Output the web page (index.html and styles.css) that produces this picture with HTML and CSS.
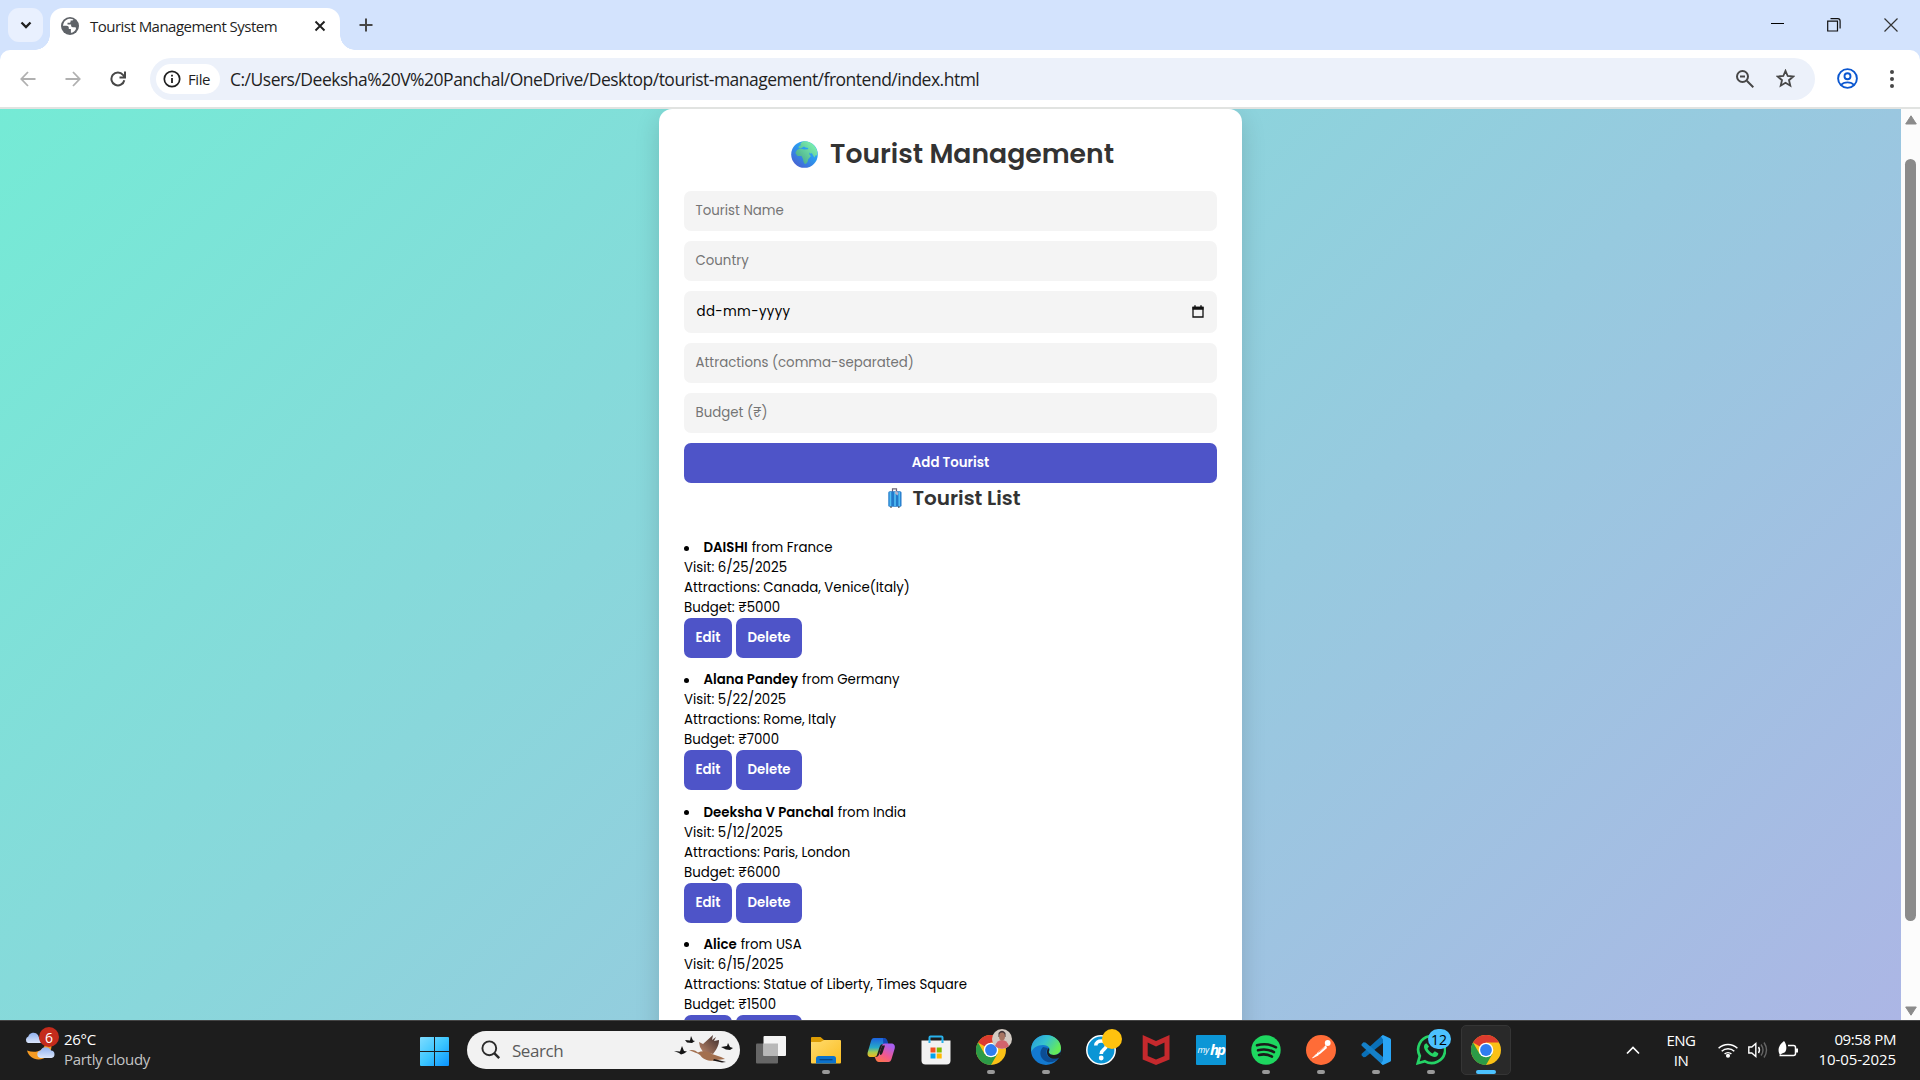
FILE: index.html
```html
<!DOCTYPE html>
<html lang="en">
<head>
<meta charset="utf-8">
<title>Tourist Management System</title>
<link rel="stylesheet" href="styles.css">
</head>
<body>
<div class="desktop">
  <header class="tabstrip">
    <button class="tab-search" aria-label="Search tabs"><svg width="12" height="8" viewBox="0 0 12 8"><path d="M1.500 1.500 6 6l4.500-4.500" fill="none" stroke="#1f1f1f" stroke-width="2.300"/></svg></button>
    <div class="tab">
      <svg class="favicon" viewBox="0 0 18 18"><circle cx="9" cy="9" r="9" fill="#5f6368"/><path d="M8 1.800c-2 .3-4.600 2-5.500 4.600l-.6 2.300 3.500.1c1.600 0 2.400.8 2.400 2v1.300h2.100v3.700c1.200-.1 3.700-1.200 4.800-3.400.5-1 .4-2-.5-2.200h-2.400c-1 0-1.700-.8-1.700-1.700v-1H6.500V5.700h1.800c.8 0 1.300-.6 1.300-1.300V3.500h1.900l1-1C11 1.700 9.500 1.500 8 1.800Z" fill="#fff"/></svg>
      <span class="tab-title">Tourist Management System</span>
      <svg class="tab-close" viewBox="0 0 12 12"><path d="m1.500 1.500 9 9m0-9-9 9" stroke="#1f1f1f" stroke-width="1.900"/></svg>
    </div>
    <svg class="new-tab" viewBox="0 0 14 14"><path d="M7 .5v13M.5 7h13" stroke="#474747" stroke-width="2"/></svg>
    <div class="window-controls">
      <svg width="13" height="14" viewBox="0 0 13 14"><path d="M0 5.500h13" stroke="#000"/></svg>
      <svg width="14" height="14" viewBox="0 0 14 14"><path d="M.7 3.200h9.800v9.800H.7zM3.500.7h7.300q2.300 0 2.300 2.300v7.500" fill="none" stroke="#111" stroke-width="1.200"/></svg>
      <svg width="14" height="14" viewBox="0 0 14 14"><path d="m.5.5 13 13m0-13-13 13" stroke="#333" stroke-width="1.200"/></svg>
    </div>
  </header>

  <nav class="toolbar">
    <svg class="nav-icon" viewBox="0 0 16 16"><path d="M15.500 8H1.500M8 1 1.300 8 8 15" fill="none" stroke="#b0b0b0" stroke-width="1.800"/></svg>
    <svg class="nav-icon" viewBox="0 0 16 16"><path d="M.5 8h14M8 1l6.700 7L8 15" fill="none" stroke="#b0b0b0" stroke-width="1.800"/></svg>
    <svg class="nav-icon" viewBox="0 0 16 16"><path d="M14.300 9.200A6.500 6.500 0 1 1 13 3.800l1.500 1.700M15 .5v6H9.500" fill="none" stroke="#474747" stroke-width="2"/></svg>
    <div class="omnibox">
      <div class="file-chip">
        <svg width="18" height="18" viewBox="0 0 18 18"><circle cx="9" cy="9" r="7.700" fill="none" stroke="#1f1f1f" stroke-width="1.700"/><path d="M9 8v5M9 4.800v1.800" stroke="#1f1f1f" stroke-width="1.800"/></svg>
        <span class="file-label">File</span>
      </div>
      <span class="url">C:/Users/Deeksha%20V%20Panchal/OneDrive/Desktop/tourist-management/frontend/index.html</span>
      <svg class="zoom-icon" width="18" height="18" viewBox="0 0 18 18"><path d="m10.800 10.800 6.500 6.500M4 6.500h5" stroke="#474747" stroke-width="2"/><circle cx="6.500" cy="6.500" r="5.500" fill="none" stroke="#474747" stroke-width="2"/></svg>
      <svg width="19" height="19" viewBox="0 0 19 19"><path d="m9.500 1.800 2.200 5.200 5.600.5-4.300 3.700 1.300 5.500-4.800-2.900-4.800 2.900L6 11.200 1.700 7.500 7.300 7Z" fill="none" stroke="#474747" stroke-width="1.800"/></svg>
    </div>
    <svg class="profile" width="21" height="21" viewBox="0 0 21 21" fill="none" stroke="#0b57d0" stroke-width="1.900"><circle cx="10.500" cy="10.500" r="9.400"/><circle cx="10.500" cy="8.300" r="3"/><path d="M4 17c1.500-1.800 3.800-2.600 6.500-2.600S15.500 15.200 17 17"/></svg>
    <svg class="kebab" width="4" height="18" viewBox="0 0 4 18" fill="#474747"><circle cx="2" cy="2" r="2"/><circle cx="2" cy="9" r="2"/><circle cx="2" cy="16" r="2"/></svg>
  </nav>

  <main class="viewport">
    <div class="page">
      <section class="card">
        <h1 class="title">
          <svg class="globe" viewBox="0 0 27 27"><defs><linearGradient id="sea" x1="1" y1="0" x2="0.200" y2="1"><stop offset="0" stop-color="#31b5fb"/><stop offset="0.500" stop-color="#2c97ee"/><stop offset="1" stop-color="#4a5fd0"/></linearGradient><linearGradient id="land" x1="1" y1="0" x2="0" y2="1"><stop offset="0" stop-color="#86ffb4"/><stop offset="1" stop-color="#3f9a85"/></linearGradient></defs><circle cx="13.500" cy="13.500" r="13.300" fill="url(#sea)"/><path d="M12 .5c6-1 12 3 14 9l.4 5-1.700-.3-1.200 2.300-1.500-2.200-1-2-2 .2-1-1.300.5 2.500 1.500 1.300-2.800 3.200c-.3 2.500-1.300 4.500-3.200 5-1.500-1.500-1.700-3.300-2-5.200l-1.500-3H6.500L4.300 12l1.700-3 3.300-1.500 4 1 3.500-.3.500-1.200-2.800-.5-1.500-1-2.500 1.500-3 .2.300-2.200 2-.8-.3-2Z" fill="url(#land)"/></svg>
          <span>Tourist Management</span>
        </h1>
        <form class="form">
          <div class="field"><span>Tourist Name</span></div>
          <div class="field"><span>Country</span></div>
          <div class="field field-date"><span>dd-mm-yyyy</span>
            <svg width="12" height="13" viewBox="0 0 12 13"><path d="M1 2.300h10v9.700H1z" fill="none" stroke="#111" stroke-width="1.300"/><path d="M.5 1.700h11v3H.5zM2.300.2h1.400v2H2.300zM8.300.2h1.400v2H8.300z" fill="#111"/></svg>
          </div>
          <div class="field"><span>Attractions (comma-separated)</span></div>
          <div class="field"><span>Budget (₹)</span></div>
          <button type="button" class="btn">Add Tourist</button>
        </form>
        <h2 class="subtitle">
          <svg class="luggage" viewBox="0 0 14 20"><path d="M4.500 4V.8h4V4" fill="none" stroke="#6b6477" stroke-width="1.200"/><rect x=".3" y="3.200" width="13.200" height="15.500" rx="1.500" fill="#2379c9"/><path d="M2.400 4v14M7 4v14M11.300 4v14" stroke="#50bdf3" stroke-width="1.700"/><path d="M3 18.500v1.300M10.800 18.500v1.300" stroke="#444" stroke-width="1.500"/><path d="m7.500 2.500 3 2.500-1 2.500-2.500-2Z" fill="#b9b3c9"/></svg>
          <span>Tourist List</span>
        </h2>
        <ul class="list">
          <li><p class="who"><b>DAISHI</b><span>from France</span></p><p>Visit: 6/25/2025</p><p>Attractions: Canada, Venice(Italy)</p><p>Budget: ₹5000</p><div class="actions"><button class="btn btn-edit">Edit</button><button class="btn btn-delete">Delete</button></div></li>
          <li><p class="who"><b>Alana Pandey</b><span>from Germany</span></p><p>Visit: 5/22/2025</p><p>Attractions: Rome, Italy</p><p>Budget: ₹7000</p><div class="actions"><button class="btn btn-edit">Edit</button><button class="btn btn-delete">Delete</button></div></li>
          <li><p class="who"><b>Deeksha V Panchal</b><span>from India</span></p><p>Visit: 5/12/2025</p><p>Attractions: Paris, London</p><p>Budget: ₹6000</p><div class="actions"><button class="btn btn-edit">Edit</button><button class="btn btn-delete">Delete</button></div></li>
          <li><p class="who"><b>Alice</b><span>from USA</span></p><p>Visit: 6/15/2025</p><p>Attractions: Statue of Liberty, Times Square</p><p>Budget: ₹1500</p><div class="actions"><button class="btn btn-edit" aria-label="Edit"></button><button class="btn btn-delete" aria-label="Delete"></button></div></li>
        </ul>
      </section>
    </div>
    <aside class="scrollbar">
      <svg width="12" height="10" viewBox="0 0 12 10"><path d="M6 .8 11.300 9H.7Z" fill="#8b8b8b" stroke="#8b8b8b" stroke-linejoin="round"/></svg>
      <div class="thumb"></div>
      <svg width="12" height="10" viewBox="0 0 12 10"><path d="M6 9.200 11.300 1H.7Z" fill="#8b8b8b" stroke="#8b8b8b" stroke-linejoin="round"/></svg>
    </aside>
  </main>

  <footer class="taskbar">
    <div class="weather">
      <div class="weather-icon">
        <svg width="32" height="30" viewBox="0 0 32 30"><defs><linearGradient id="cloud" x1="0" y1="0" x2="0" y2="1"><stop offset="0" stop-color="#8fb0ee"/><stop offset="1" stop-color="#dbe6fb"/></linearGradient></defs><path d="M27.500 12.500c.5 9.500-6 15-13 15-5.500 0-10-3.500-11.500-9 8 3 16 1 18.500-6.500Z" fill="#f59b23"/><path d="M4 11a3.500 3.500 0 0 1 .3-6.500A5.500 5.500 0 0 1 14 3l3 8Z" fill="url(#cloud)"/><path d="M16.500 26a3.800 3.800 0 0 1 0-7.500 5.800 5.800 0 0 1 10.500 0 3.800 3.800 0 0 1 .5 7.500Z" fill="url(#cloud)"/></svg>
        <span class="badge badge-red">6</span>
      </div>
      <div class="stack"><span>26°C</span><span class="dim">Partly cloudy</span></div>
    </div>
    <svg class="start" viewBox="0 0 29 29"><defs><linearGradient id="win" x1="0" y1="0" x2="1" y2="1"><stop offset="0" stop-color="#7fdcff"/><stop offset="0.500" stop-color="#3cc6ff"/><stop offset="1" stop-color="#0a93ff"/></linearGradient></defs><path d="M1 0h13v14H0V1q0-1 1-1ZM15 0h13q1 0 1 1v13H15ZM0 15h14v14H1q-1 0-1-1ZM15 15h14v13q0 1-1 1H15Z" fill="url(#win)"/></svg>
    <div class="search">
      <svg width="20" height="20" viewBox="0 0 20 20"><circle cx="8.300" cy="8.300" r="6.900" fill="none" stroke="#2b2b2b" stroke-width="1.900"/><path d="m13.200 13.200 5 5" stroke="#2b2b2b" stroke-width="2.500"/></svg>
      <span class="search-label">Search</span>
      <svg class="birds" width="60" height="30" viewBox="0 0 60 30"><defs><linearGradient id="wing" x1="0" y1="1" x2="1" y2="0"><stop offset="0" stop-color="#c08a6c"/><stop offset="1" stop-color="#3b2a2a"/></linearGradient></defs><path d="m29 17-3-5-1-5 4 2L39 0l-1 5 4-3-2 4 5-1c0 6-3 10-6 14Z" fill="url(#wing)"/><path d="M15 15.500c4-1.500 7 .5 9 2 4-2 10-1.500 14 1.500l9 3 4 2-8 1c-6 2-14 0-17-5-3-2-7-3.500-11-4.500Z" fill="#a3704f"/><path d="m40 24 12 3-4 .5-9-2Z" fill="#1a1414"/><path d="m11 5 5 .5L17 1l2 4.500 2 .5-3 2-5-.5ZM0 16l6 .5L8 11l2 5 3 .5-3 2-3 1-2-1.500Zm47-4 6-1 1-3 2 4 3 1-3 2-4-.5Z" fill="#151515"/></svg>
    </div>
    <div class="apps">
      <div class="app"><svg viewBox="0 0 30 30"><rect y="8.500" width="22" height="20" rx="1" fill="#666"/><rect x="7.500" y="1" width="22.500" height="20" rx="1" fill="#f4f4f4"/><path d="M7.500 8.500H22V21H7.500z" fill="#b8b8b8"/></svg></div>
      <div class="app running"><svg viewBox="0 0 30 30"><defs><linearGradient id="fold" x1="0" y1="0" x2="1" y2="1"><stop offset="0" stop-color="#ffdb6e"/><stop offset="1" stop-color="#fbbd20"/></linearGradient></defs><path d="M0 3q0-1 1-1h8.500L13 5H29v8H0Z" fill="#dc9c04"/><path d="M0 7h9.500L13 5h16q1 0 1 1v21.500q0 1-1 1H1q-1 0-1-1Z" fill="url(#fold)"/><path d="M5 28.500v-5q0-2.500 2.500-2.500h15q2.500 0 2.500 2.500v5Z" fill="#0c72cc"/><path d="M8.500 24.700h13" stroke="#07427f" stroke-width="1.200"/></svg></div>
      <div class="app"><svg viewBox="0 0 30 30"><defs><linearGradient id="cpa" x1="0" y1="0" x2="0" y2="1"><stop offset="0" stop-color="#1c62e0"/><stop offset="0.500" stop-color="#27a9c7"/><stop offset="0.750" stop-color="#a6cc4e"/><stop offset="1" stop-color="#f5b61f"/></linearGradient><linearGradient id="cpb" x1="0" y1="1" x2="0.600" y2="0"><stop offset="0" stop-color="#ff7d3a"/><stop offset="0.500" stop-color="#f1588e"/><stop offset="1" stop-color="#a85ff0"/></linearGradient></defs><path d="M8 3h9.500c2 0 3 1.500 3.500 3l.8 3h-4.500c-2 0-3 1-3.700 3l-2.500 7.500c-.6 1.800-1.500 2.500-3 2.500H5C2 22 1 20 1.800 17L5 6c.6-2 1.500-3 3-3Z" fill="url(#cpa)"/><path d="M17 3h1c2 0 3 1.500 3.500 3l.8 3h-5Z" fill="#1449b8"/><path d="M22.500 27H13c-2 0-3-1.500-3.500-3l-.8-2c3.500 0 4-1.500 4.600-3.500L15.800 11c.6-1.800 1.500-2.500 3-2.500H25c3 0 4.500 2 3.700 5L25.500 24c-.6 2-1.500 3-3 3Z" fill="url(#cpb)"/><path d="M13.500 18 16 10.500h3L16.500 18q-.7 2-2.300 2Z" fill="#1d1d1d"/></svg></div>
      <div class="app"><svg viewBox="0 0 30 30"><path d="M8.500 7V2.500q0-1 1-1h11q1 0 1 1V7" fill="none" stroke="#28b2ec" stroke-width="2"/><path d="M.5 5.500h29v20q0 4-4 4h-21q-4 0-4-4Z" fill="#f2f2f2"/><path d="M8.500 5v3M21.500 5v3" stroke="#28b2ec" stroke-width="2"/><path d="M9.500 12.500h5v5h-5z" fill="#f25022"/><path d="M15.700 12.500h5v5h-5z" fill="#7fba00"/><path d="M9.500 18.500h5v5h-5z" fill="#00a4ef"/><path d="M15.700 18.500h5v5h-5z" fill="#ffb900"/></svg></div>
      <div class="app running"><svg viewBox="0 0 30 30"><circle cx="15" cy="15" r="15" fill="#fbc116"/><path d="M15 15 2 7.500A15 15 0 0 1 28 7.500H15Z" fill="#dc3b2e"/><path d="m21.500 18.700-6.500 11.300A15 15 0 0 1 2 7.500l6.500 11.300Z" fill="#2c9b47"/><circle cx="15" cy="15" r="7.300" fill="#fff"/><circle cx="15" cy="15" r="5.900" fill="#2f7df0"/></svg>
        <svg class="avatar" viewBox="0 0 20 20"><circle cx="10" cy="10" r="10" fill="#d3cbc3"/><path d="M3 17q2-6 7-6t7 6a10 10 0 0 1-14 0Z" fill="#d3636d"/><path d="M6.500 8V4q3.500-4.500 7 0v4Z" fill="#423437"/><ellipse cx="10" cy="7.500" rx="3" ry="4" fill="#a87562"/></svg></div>
      <div class="app running"><svg viewBox="0 0 30 30"><defs><linearGradient id="ea" x1="0" y1="0" x2="1" y2="0.500"><stop offset="0" stop-color="#2595dc"/><stop offset="0.500" stop-color="#35c1d0"/><stop offset="1" stop-color="#66eb57"/></linearGradient></defs><circle cx="15" cy="15" r="15" fill="#1379d0"/><path d="M.3 13C1 5 8 0 15 0c8.500 0 15 6 15 13 0 4-3 7-7 7-3.500 0-5.500-1.500-5-3 2-3 0-7-6-7S2 13 .3 17Z" fill="url(#ea)"/><path d="M12 12c-5 5-2.500 13 4.500 15 4.500 1 9-1 11.500-4.500-5 3-13 1-12.500-6 .1-2 1.500-3.500 1.500-3.500Z" fill="#0c4d94"/><path d="M17.500 13c1.500 1.500 0 3 .3 4.500.6 1.700 2.700 2.500 5.200 2.500 3 0 5.500-1.500 6.500-3.500l.5 2-1.500 4c-5 3-13 1-12.500-6 .1-2 1.500-3.500 1.500-3.500Z" fill="#1d1d1d"/></svg></div>
      <div class="app"><svg viewBox="0 0 30 30"><circle cx="15" cy="15" r="14.200" fill="#0a95d5" stroke="#fff" stroke-width="1.500"/><path d="M9.800 10.500c0-6 10.700-6 10.700 0 0 4-5.300 4-5.300 8.500" fill="none" stroke="#fff" stroke-width="3.600"/><circle cx="15.200" cy="23" r="2.400" fill="#fff"/></svg><span class="dot-yellow"></span></div>
      <div class="app"><svg viewBox="0 0 30 30"><path d="m1.700 0 13.300 6L28.500 0v24.500L15 30 1.700 24.500Zm5 7.500V21L15 24.500l8.500-3.500V7.500L15 11.500Z" fill="#c5292d" fill-rule="evenodd"/></svg></div>
      <div class="app"><svg viewBox="0 0 30 30"><rect width="30" height="30" rx="1" fill="#0c96d6"/><text class="hp-my" x="1.500" y="18">my</text><text class="hp-hp" x="14" y="19.500">hp</text></svg></div>
      <div class="app running"><svg viewBox="0 0 30 30"><circle cx="15" cy="15" r="14.700" fill="#1ed760"/><path d="M6 10.300q10-2.800 19 2M7 15.300q8.500-2.300 16 1.800M8 20q7-1.800 13 1.600" fill="none" stroke="#1a1a1a" stroke-width="2.500" stroke-linecap="round"/></svg></div>
      <div class="app running"><svg viewBox="0 0 30 30"><circle cx="15" cy="15" r="15" fill="#ff6c37"/><circle cx="21.700" cy="8" r="2.900" fill="#fff"/><path d="m20 10-9 8-1 3 4-2 7-6Z" fill="#fff"/><path d="m10.500 19-4 4 6-3" fill="#fff" stroke="#fff" stroke-width=".7"/><path d="m12.500 17.500 6-5.500" stroke="#ff6c37" stroke-width=".8"/></svg></div>
      <div class="app running"><svg viewBox="0 0 30 30"><path d="m22 8-17.500 14-2 .3-2-2 .2-1.500L20 1.500l2-1.500Z" fill="#0a70b8"/><path d="m22 22L4.500 7.500l-2-.2-2 1.900.2 1.500L20 28.500l2 1.500Z" fill="#1580c8"/><path d="m22 0 7 3.200q1 .5 1 1.500v20.600q0 1-1 1.500L22 30l-2-1.500 2-3V4.500l-2-3Z" fill="#2aa5f5"/></svg></div>
      <div class="app running"><svg viewBox="0 0 30 30"><path d="m1.800 28.200 2-7.200A13.500 13.500 0 1 1 9 26.300Z" fill="none" stroke="#25d366" stroke-width="2.700"/><path d="M10.500 8.300c-3 .8-3.200 4.300-1 7.500s5.800 6 9 6.200c2.500 0 4-2 3.800-3.800l-3.500-2-2.300 2.200c-2.300-.9-4-2.700-5-4.800l1.500-2Z" fill="#25d366"/></svg><span class="badge badge-blue">12</span></div>
      <div class="app running active"><svg viewBox="0 0 30 30"><circle cx="15" cy="15" r="15" fill="#fbc116"/><path d="M15 15 2 7.500A15 15 0 0 1 28 7.500H15Z" fill="#dc3b2e"/><path d="m21.500 18.700-6.500 11.300A15 15 0 0 1 2 7.500l6.500 11.300Z" fill="#2c9b47"/><circle cx="15" cy="15" r="7.300" fill="#fff"/><circle cx="15" cy="15" r="5.900" fill="#2f7df0"/></svg></div>
    </div>
    <div class="tray">
      <svg class="chevron" width="14" height="9" viewBox="0 0 14 9"><path d="m1 7.500 6-6 6 6" fill="none" stroke="#fff" stroke-width="1.700"/></svg>
      <div class="stack lang"><span>ENG</span><span>IN</span></div>
      <div class="tray-icons">
        <svg width="20" height="16" viewBox="0 0 20 16" fill="none" stroke="#fff" stroke-width="1.500"><path d="M.6 6.200a13.500 13.500 0 0 1 18.800 0M3.700 9.300a9 9 0 0 1 12.600 0M6.600 12a5 5 0 0 1 6.800 0"/><circle cx="10" cy="13.800" r="1.300" fill="#fff"/></svg>
        <svg width="20" height="18" viewBox="0 0 20 18" fill="none" stroke="#fff" stroke-width="1.400"><path d="M.8 6v6h3l4 3.500v-13L3.800 6Z"/><path d="M10.500 6q2 3 0 6"/><path d="M13 3.500q4 5.500 0 11M16 1.500q5 7.500 0 15" stroke="#666"/></svg>
        <svg width="20" height="18" viewBox="0 0 20 18"><path d="M10 4.500h5.500q2 0 2 2v6q0 2-2 2H1.500" fill="none" stroke="#fff" stroke-width="1.500"/><path d="M18 7.500h2v4h-2zM6 0c2.500 2.500 3.500 9 .5 11.500L4 12.500l-2 1.500-1-2C-.5 7 2 3 6 0Z" fill="#fff"/></svg>
      </div>
      <div class="stack clock"><span>09:58 PM</span><span class="date">10-05-2025</span></div>
    </div>
  </footer>
</div>
</body>
</html>
```
FILE: styles.css
```css
* { box-sizing: border-box; }
body { margin: 0; overflow: hidden; font-family: "Open Sans", "Noto Sans", sans-serif; }
svg { display: block; flex: none; }
p, h1, h2, ul { margin: 0; padding: 0; }
button { border: 0; padding: 0; font: inherit; }

.desktop { display: grid; grid-template-rows: 50px 59px 911px 60px; width: 1920px; height: 1080px; background: #d3e3fd; }

.tabstrip { display: flex; align-items: flex-start; padding: 8px 22px 0 8px; }
.tab-search { display: flex; align-items: center; justify-content: center; width: 35px; height: 34px; border-radius: 11px; background: #e9f0fe; }
.tab { position: relative; display: flex; align-items: center; width: 290px; height: 42px; margin-left: 7px; padding: 0 14px 7px 11px; border-radius: 13px 13px 0 0; background: #fff; }
.tab::before, .tab::after { content: ""; position: absolute; bottom: 0; width: 15px; height: 15px; }
.tab::before { left: -15px; background: radial-gradient(circle at 0 0, transparent 14.500px, #fff 15px); }
.tab::after { right: -15px; background: radial-gradient(circle at 100% 0, transparent 14.500px, #fff 15px); }
.favicon { width: 18px; height: 18px; }
.tab-title { margin-left: 11px; font-size: 15px; letter-spacing: -.52px; line-height: 20px; white-space: nowrap; color: #1f1f1f; }
.tab-close { width: 12px; height: 12px; margin-left: auto; }
.new-tab { width: 14px; height: 14px; margin: 10px 0 0 18.500px; }
.window-controls { display: flex; gap: 43px; margin: 10px 0 0 auto; }

.toolbar { display: flex; align-items: center; padding: 0 26px 0 20px; border-bottom: 2px solid #e1e3e1; border-radius: 10px 10px 0 0; background: #fff; }
.nav-icon { width: 16px; height: 16px; margin-right: 29px; }
.nav-icon + .nav-icon + .nav-icon { margin-right: 24px; }
.omnibox { display: flex; align-items: center; width: 1665px; height: 42px; padding: 0 20px 0 6px; border-radius: 21px; background: #ecf1fa; }
.file-chip { display: flex; align-items: center; gap: 7px; width: 64px; height: 30px; padding-left: 7px; border-radius: 15px; background: #fff; }
.file-label { font-size: 15px; font-weight: 500; letter-spacing: -.45px; color: #1f1f1f; }
.url { margin-left: 10px; font-size: 17.500px; letter-spacing: -.5px; white-space: nowrap; color: #1f1f1f; }
.zoom-icon { margin: 0 22px 0 auto; }
.profile { margin-left: 22px; }
.kebab { margin-left: auto; }

.viewport { display: grid; grid-template-columns: 1901px 19px; overflow: hidden; background: #fcfcfc; }
.page { display: flex; justify-content: center; align-items: flex-start; overflow: hidden; background: linear-gradient(135deg, #74ebd5, #acb6e5) 0 -33px / 1901px 946px; font-family: Poppins, Inter, sans-serif; font-size: 13.330px; line-height: 20px; color: #000; }
.card { width: 583px; height: 980px; padding: 25px; border-radius: 13px 13px 0 0; background: #fff; box-shadow: 0 8px 24px rgba(0, 0, 0, .15); }
.title { display: flex; justify-content: center; align-items: center; gap: 12px; height: 40px; margin-bottom: 17px; padding-left: 4px; font-size: 26.670px; font-weight: 600; color: #333; }
.globe { width: 27px; height: 27px; }
.form { display: grid; gap: 10px; }
.field { display: flex; align-items: center; justify-content: space-between; height: 40px; padding: 0 12px 0 11.500px; border-radius: 7px; background: #f4f4f4; color: #757575; }
.field-date { height: 42px; padding: 0 13px 0 12.500px; color: #000; }
.field-date span { letter-spacing: .38px; }
.field-date svg { margin-bottom: 2px; }
.btn { height: 40px; border-radius: 7px; background: #4e54c8; color: #fff; font-weight: 600; }
.btn-edit { width: 48px; }
.btn-delete { width: 66px; }
.subtitle { display: flex; justify-content: center; align-items: center; gap: 11px; height: 30px; margin-bottom: 25px; padding-left: 7px; font-size: 20px; font-weight: 600; color: #333; }
.luggage { width: 14px; height: 20px; }
.list { list-style: none; }
.list li { height: 132.300px; }
.list p { height: 20px; white-space: nowrap; }
.list b { font-weight: 600; }
.who { display: flex; align-items: center; gap: 4px; }
.who::before { content: ""; width: 5px; height: 5px; margin-right: 10.500px; border-radius: 50%; background: #000; }
.actions { display: flex; gap: 4px; }
.scrollbar { display: flex; flex-direction: column; align-items: center; padding: 6px 0 4px; }
.thumb { width: 11px; height: 762px; margin: 34px 0 auto; border-radius: 6px; background: #8b8b8b; }

.taskbar { display: flex; align-items: center; box-shadow: inset 0 1px #444; background: #1d1d1d; color: #fff; font-size: 15px; }
.weather { display: flex; width: 420px; padding: 0 0 2px 24px; gap: 8px; letter-spacing: -.3px; }
.weather-icon { position: relative; width: 32px; padding-top: 3px; }
.badge { position: absolute; display: flex; align-items: center; justify-content: center; height: 20px; border-radius: 10px; font-size: 14px; letter-spacing: 0; }
.badge-red { left: 15px; top: -2px; width: 20px; background: #c42b1c; }
.badge-blue { left: 24px; top: 4px; width: 23px; background: #4cc2ff; color: #000; }
.stack { display: flex; flex-direction: column; align-items: flex-start; line-height: 20px; white-space: nowrap; }
.dim { color: #c4c4c4; }
.start { width: 29px; height: 29px; margin-top: 2px; }
.search { display: flex; align-items: center; width: 273px; height: 38px; margin-left: 18px; padding: 0 6px 0 14px; border-radius: 19px; background: #f2f2f2; }
.search-label { margin-left: 11px; font-size: 17px; letter-spacing: -.45px; color: #5a5a5a; }
.birds { margin-left: auto; }
.apps { display: flex; margin-left: 3.500px; }
.app { position: relative; display: flex; justify-content: center; width: 55px; height: 50px; padding-top: 10px; }
.app > svg:first-child { width: 30px; height: 30px; }
.running::after { content: ""; position: absolute; bottom: 1px; left: 23.500px; width: 8px; height: 4px; border-radius: 2px; background: #999; }
.active { width: 50px; margin: 0 2.500px; border: 1px solid #353535; border-radius: 5px; background: #292929; padding-top: 9px; }
.active::after { bottom: 0; left: 14px; width: 20px; background: #4cc2ff; }
.app .avatar { position: absolute; left: 28.500px; top: 4px; width: 20px; height: 20px; }
.dot-yellow { position: absolute; left: 28px; top: 4px; width: 20px; height: 20px; border-radius: 50%; background: #ffc20e; }
.hp-my { font: italic 9px "Open Sans", sans-serif; fill: #fff; letter-spacing: -.3px; }
.hp-hp { font: italic 700 15px "Open Sans", sans-serif; fill: #fff; letter-spacing: -2px; }
.tray { display: flex; align-items: center; margin-left: auto; padding: 0 24px 0 0; }
.lang { width: 30px; margin: 0 22px 0 26px; align-items: center; letter-spacing: -.55px; }
.tray-icons { display: flex; align-items: center; gap: 10px; }
.clock { width: 78px; margin: 0 0 2px 20px; align-items: flex-end; letter-spacing: -.38px; }
.date { letter-spacing: -.08px; }
```
